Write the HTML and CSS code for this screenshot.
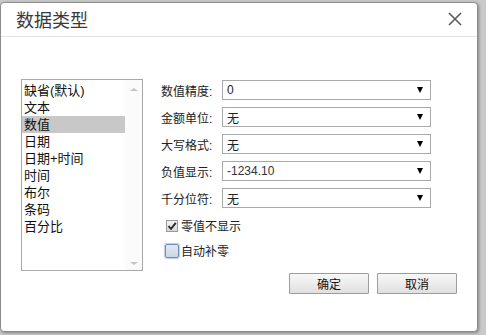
FILE: index.html
```html
<!DOCTYPE html>
<html lang="zh">
<head>
<meta charset="utf-8">
<title>数据类型</title>
<link rel="stylesheet" href="styles.css">
</head>
<body>
<div class="dialog">
  <div class="header">
    <span class="title">数据类型</span>
    <span class="close"><svg width="14" height="14" viewBox="0 0 14 14"><path d="M1 1 L13 13 M13 1 L1 13" stroke="#5a5a5a" stroke-width="1.6" fill="none"/></svg></span>
  </div>
  <div class="content">
    <div class="listbox">
      <ul class="items">
        <li>缺省(默认)</li>
        <li>文本</li>
        <li class="selected">数值</li>
        <li>日期</li>
        <li>日期+时间</li>
        <li>时间</li>
        <li>布尔</li>
        <li>条码</li>
        <li>百分比</li>
      </ul>
      <div class="scrollbar">
        <span class="tri up"></span>
        <span class="tri down"></span>
      </div>
    </div>
    <div class="form">
      <div class="row"><span class="label">数值精度:</span><div class="select"><span class="value">0</span><span class="arrow"></span></div></div>
      <div class="row"><span class="label">金额单位:</span><div class="select"><span class="value">无</span><span class="arrow"></span></div></div>
      <div class="row"><span class="label">大写格式:</span><div class="select"><span class="value">无</span><span class="arrow"></span></div></div>
      <div class="row"><span class="label">负值显示:</span><div class="select"><span class="value num">-1234.10</span><span class="arrow"></span></div></div>
      <div class="row"><span class="label">千分位符:</span><div class="select"><span class="value">无</span><span class="arrow"></span></div></div>
      <div class="check first">
        <span class="box checked"><svg width="10" height="10" viewBox="0 0 10 10"><path d="M1.5 5.2 L4 7.8 L8.8 1.8" stroke="#2a2a2a" stroke-width="1.9" fill="none"/></svg></span>
        <span class="ctext">零值不显示</span>
      </div>
      <div class="check second">
        <span class="box focus"></span>
        <span class="ctext">自动补零</span>
      </div>
      <div class="buttons">
        <button class="btn">确定</button>
        <button class="btn">取消</button>
      </div>
    </div>
  </div>
</div>
</body>
</html>
```
FILE: styles.css
```css
html, body {
  margin: 0;
  padding: 0;
}
body {
  width: 486px;
  height: 335px;
  overflow: hidden;
  background: #c9c9c9;
  padding-top: 2px;
  box-sizing: border-box;
  font-family: "Liberation Sans", "Noto Sans CJK SC", sans-serif;
  color: #222;
}
.dialog {
  width: 478px;
  height: 330px;
  box-sizing: border-box;
  background: #fff;
  border: 1px solid #8c8c8c;
  border-radius: 4px;
  box-shadow: 1px 1px 3px rgba(0,0,0,0.35);
  display: flex;
  flex-direction: column;
}
.header {
  border-bottom: 1px solid #e3e3e3;
  display: flex;
  align-items: center;
  justify-content: space-between;
  padding: 0 15px 2px 15px;
  box-sizing: content-box;
  height: 31px;
}
.title {
  font-family: "Noto Sans CJK SC", sans-serif;
  font-size: 18px;
  color: #3a3a3a;
  line-height: 20px;
}
.close {
  width: 14px;
  height: 14px;
  display: flex;
}
.content {
  display: flex;
  padding: 42px 0 0 20px;
  gap: 18px;
}
.listbox {
  width: 122px;
  height: 192px;
  box-sizing: border-box;
  border: 1px solid #a9a9a9;
  display: flex;
}
.items {
  list-style: none;
  margin: 0;
  padding: 2px 0 0 0;
  flex: 1;
  font-family: "Liberation Sans", "Noto Sans CJK SC", sans-serif;
  font-size: 13px;
  color: #111;
}
.items li {
  height: 17px;
  line-height: 17px;
  padding-left: 2px;
  white-space: nowrap;
}
.items li.selected {
  background: #c8c8c8;
}
.scrollbar {
  width: 17px;
  display: flex;
  flex-direction: column;
  justify-content: space-between;
  align-items: center;
  padding: 8px 0 5px;
  background: #fbfbfb;
}
.tri {
  width: 0;
  height: 0;
  border-left: 4px solid transparent;
  border-right: 4px solid transparent;
}
.tri.up {
  border-bottom: 3px solid #c4c4c4;
}
.tri.down {
  border-top: 3px solid #c4c4c4;
}
.form {
  width: 296px;
  display: flex;
  flex-direction: column;
  padding-top: 1px;
}
.row {
  display: flex;
  align-items: center;
  height: 20px;
  margin-bottom: 7px;
}
.label {
  width: 61px;
  font-family: "Liberation Sans", "Noto Sans CJK SC", sans-serif;
  font-size: 12px;
  color: #222;
  white-space: nowrap;
}
.select {
  width: 209px;
  height: 20px;
  box-sizing: border-box;
  border: 1px solid #a9a9a9;
  display: flex;
  align-items: center;
  justify-content: space-between;
  padding: 0 7px 0 4px;
}
.value {
  font-family: "Liberation Sans", "Noto Sans CJK SC", sans-serif;
  font-size: 12px;
  color: #222;
}
.value.num {
  color: #333;
}
.arrow {
  width: 0;
  height: 0;
  border-left: 3.5px solid transparent;
  border-right: 3.5px solid transparent;
  border-top: 6px solid #000;
}
.check {
  display: flex;
  align-items: center;
  height: 17px;
}
.check.first {
  margin-top: 2px;
  padding-left: 5px;
}
.check.second {
  margin-top: 8px;
  padding-left: 4px;
}
.box {
  box-sizing: border-box;
  display: flex;
  align-items: center;
  justify-content: center;
}
.box.checked {
  width: 12px;
  height: 12px;
  border: 1px solid #9a9a9a;
  background: linear-gradient(#f2f2f2, #d8d8d8);
  margin-right: 3px;
}
.box.focus {
  width: 14px;
  height: 14px;
  border: 1px solid #6f8fb8;
  border-radius: 2px;
  background: linear-gradient(#e4e9f0, #cdd6e2);
  box-shadow: 0 0 1px 1px #b9cde6;
  margin-right: 2px;
}
.ctext {
  font-family: "Liberation Sans", "Noto Sans CJK SC", sans-serif;
  font-size: 12px;
  color: #222;
}
.buttons {
  display: flex;
  justify-content: flex-end;
  gap: 8px;
  margin-top: 14px;
}
.btn {
  width: 80px;
  height: 21px;
  box-sizing: border-box;
  border: 1px solid #9c9c9c;
  border-radius: 1px;
  background: linear-gradient(#f8f8f8, #e0e0e0);
  font-family: "Liberation Sans", "Noto Sans CJK SC", sans-serif;
  font-size: 12px;
  color: #111;
  padding: 0;
  margin: 0;
}
```
